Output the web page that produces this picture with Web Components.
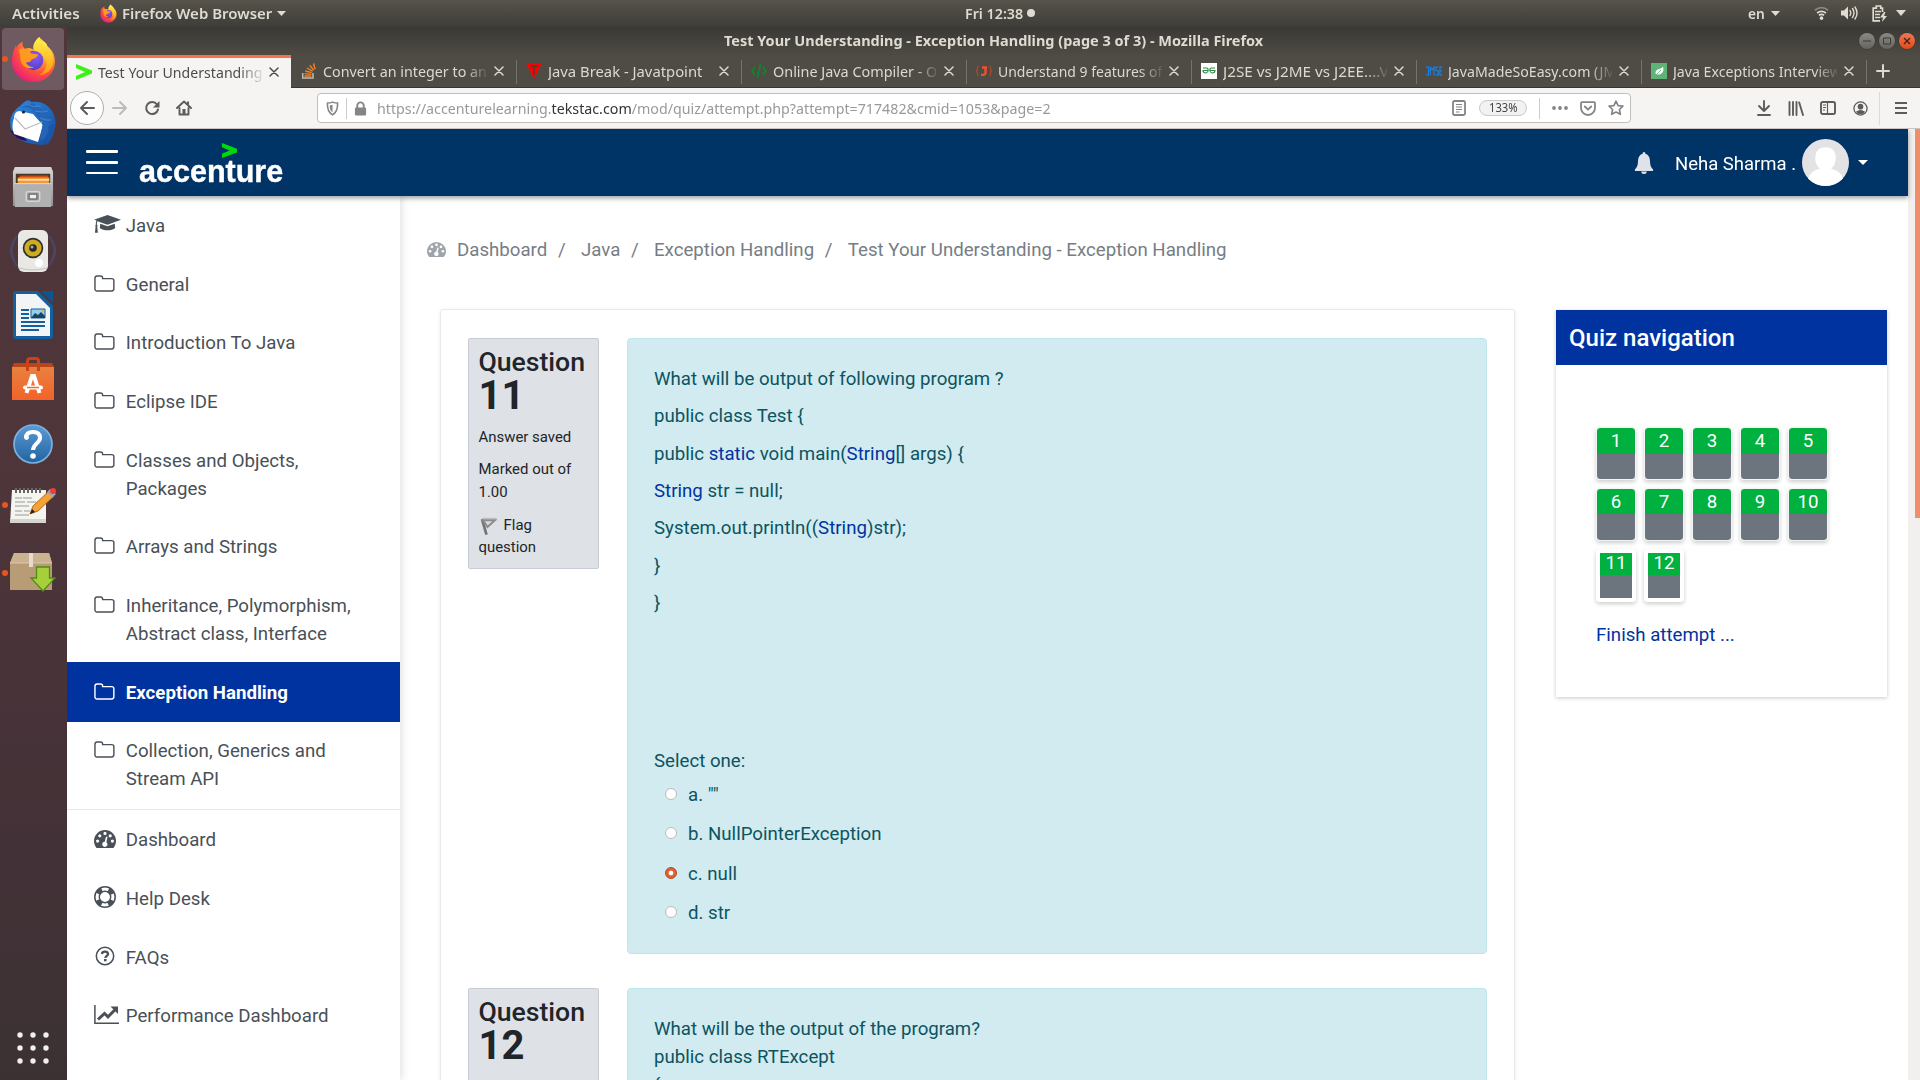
<!DOCTYPE html>
<html lang="en">
<head>
<meta charset="utf-8">
<title>Test Your Understanding - Exception Handling</title>
<style>
html,body{margin:0;padding:0;width:1920px;height:1080px;overflow:hidden;background:#fff}
</style>
</head>
<body>
<desk-screen></desk-screen>
<script>
const UI = '"Noto Sans","Open Sans",sans-serif';
const define = (name, html, setup) => customElements.define(name, class extends HTMLElement {
  connectedCallback() {
    if (this.shadowRoot) return;
    const root = this.attachShadow({mode: 'open'});
    const t = document.createElement('template');
    t.innerHTML = typeof html === 'function' ? html(this) : html;
    root.appendChild(t.content.cloneNode(true));
    if (setup) setup(this, root);
  }
});

const fox = `<defs><radialGradient id="a" cx=".75" cy=".15" r="1"><stop offset="0" stop-color="#fff44f"/><stop offset=".35" stop-color="#ffa436"/><stop offset=".65" stop-color="#ff4f3f"/><stop offset="1" stop-color="#e31587"/></radialGradient><radialGradient id="b" cx=".6" cy=".3" r=".8"><stop offset="0" stop-color="#9059ff"/><stop offset="1" stop-color="#4b3bb4"/></radialGradient><linearGradient id="c" x1="0" y1="0" x2="0" y2="1"><stop offset="0" stop-color="#fff44f"/><stop offset="1" stop-color="#ff980e"/></linearGradient></defs><path d="M5 9C3 14 1 18 1 26c0 12 10 21 22 21s22-9 22-21c0-5-2-10-5-13l-3-3c0-3-5-5-8-9-5 4-7 9-6 13-3-2-6-2-9-1-2-2-3-5-2-7-3 1-5 3-7 6z" fill="url(#a)"/><path d="M29 1c-6 5-7 10-5 14 6 2 11 6 12 12 1 7-4 12-8 13 9 0 17-7 15-18-1-7-7-11-10-14-3-2-4-4-4-7z" fill="url(#c)"/><circle cx="23" cy="25" r="10" fill="url(#b)"/><path d="M8 14c5-3 10 0 13 4l7 1c-1 3-4 4-7 5-1 3-4 3-6 3 2 3 5 5 9 5-7 3-13-1-14-7-1-4 0-6-2-11z" fill="#ff9a1f"/>`;
const dash = `<path fill-rule="evenodd" fill="currentColor" d="M2.6 18C1 16 0 13.600 0 11a11 11 0 0 1 22 0c0 2.600-1 5-2.600 7zM3.600 9.500a1.600 1.600 0 1 0 0 3.200a1.600 1.600 0 0 0 0-3.200M5.800 4.200a1.600 1.600 0 1 0 0 3.200a1.600 1.600 0 0 0 0-3.200M11 1.800a1.600 1.600 0 1 0 0 3.200a1.600 1.600 0 0 0 0-3.200M16.200 4.200a1.600 1.600 0 1 0 0 3.200a1.600 1.600 0 0 0 0-3.200M18.400 9.500a1.600 1.600 0 1 0 0 3.200a1.600 1.600 0 0 0 0-3.200M12 6.500l-1.300 5.200a2.600 2.600 0 1 0 1.700.5L13.500 7z"/>`;
const S = (w, d) => `<path fill="none" stroke="currentColor" stroke-width="${w}" stroke-linecap="round" stroke-linejoin="round" d="${d}"/>`;
const ICONS = {
  fox: ['0 0 46 48', fox],
  close: ['0 0 10 10', S(1.5, 'M1 1l8 8M9 1l-8 8')],
  plus: ['0 0 14 14', S(2, 'M7 1v12M1 7h12')],
  caret: ['0 0 10 6', '<path d="M0 0h10L5 6z" fill="currentColor"/>'],
  gt: ['0 0 16 16', '<path d="M0 0l16 6.500v3L0 16v-4l9-4-9-4z" fill="#3df01a"/>'],
  stack: ['0 0 14 16', '<path d="M1.500 10v5h9v-5" fill="none" stroke="#bcbbbb" stroke-width="1.300"/><path d="M3 13h6M3.200 10.700l6 .6M3.700 8l5.700 1.600M5.200 5l5 3.200M7.700 2.500l3.500 4.700M11 .5l1.300 5.700" stroke="#f48024" stroke-width="1.300"/>'],
  jtp: ['0 0 16 16', '<path d="M0 0h16L8 16z" fill="#f00"/><path d="M4.500 3h7M8 3v9" stroke="#4a3c35" stroke-width="1.500"/>'],
  code: ['0 0 16 16', '<path d="M4 4L1 8l3 4M12 4l3 4-3 4M9.500 1l-3 14" fill="none" stroke="#0a8a2a" stroke-width="1.600"/>'],
  jbr: ['0 0 16 16', '<path d="M2.500 3C.8 3 2 7.200.5 8c1.500.8.3 5 2 5M13.500 3c1.700 0 .5 4.200 2 5-1.500.8-.3 5-2 5" fill="none" stroke="#b8462c" stroke-width="1.200"/><path d="M6 4.500h5M9.500 4.500v5.500q0 2.200-4.500 1.800" fill="none" stroke="#f05032" stroke-width="2.400"/>'],
  gfg: ['0 0 16 16', '<path fill="#fff" d="M0 0h16v16H0z"/><path d="M2 5h3.500q1.700 0 1.700 2.200T5 10Q2 10 2 7.500h5M14 5h-3.500Q8.800 5 8.800 7.200T11 10q3 0 3-2.500H9" fill="none" stroke="#2f8d46" stroke-width="1.100"/>'],
  jmse: ['0 0 17 10', '<path d="M0 1h2.500v8H0M4.500 9.500V1l2 3 2-3v8.500M13 1h-2.500v3.800H13V9h-3M17 1h-2.200v8H17M14.800 5H17" fill="none" stroke="#1087f5" stroke-width="1.100"/>'],
  leaf: ['0 0 16 16', '<path fill="#5fb377" d="M0 0h16v16H0z"/><path d="M12 3.500c1.500 5-1 8.500-6 8-2 0-2-3 0-4.500s4-.5 6-3.500z" fill="#fff"/><path d="M4 13l6-6" stroke="#5fb377" stroke-width=".8"/>'],
  back: ['0 0 16 16', S(2, 'M15 8H2M8 2L2 8l6 6')],
  fwd: ['0 0 16 16', S(2, 'M1 8h13M8 2l6 6-6 6')],
  reload: ['0 0 16 16', S(2, 'M13 4.500a6 6 0 1 0 1 5') + '<path d="M15.500 1v6.500H9z" fill="currentColor"/>'],
  home: ['0 0 16 16', S(1.9, 'M1 8l7-6.500L15 8M3.500 8v6.500h9V8') + '<path fill="currentColor" d="M6.500 9h3v5.500h-3zM11 1.500h2v3h-2z"/>'],
  shield: ['0 0 14 16', S(1.7, 'M7 1.200c2 .9 4 1 5.500 1C12.700 8 12 12 7 14.800 2 12 1.300 8 1.500 2.200c1.500 0 3.500-.1 5.500-1z') + '<path d="M7 4v8C4.500 10 4 8 4 4.700z" fill="currentColor"/>'],
  lock: ['0 0 14 16', '<path d="M3.500 8V5a3.500 3.500 0 0 1 7 0v3" fill="none" stroke="currentColor" stroke-width="2"/><rect x="1" y="7" width="12" height="8.500" rx="1.200" fill="currentColor"/>'],
  reader: ['0 0 14 16', '<rect x="1" y="1" width="12" height="14" rx="1.500" fill="none" stroke="currentColor" stroke-width="1.800"/><path d="M4 4.500h6M4 7h6M4 9.500h6M4 12h3.500" stroke="currentColor" stroke-width="1.100"/>'],
  dots: ['0 0 16 4', '<g fill="currentColor"><circle cx="2" cy="2" r="1.900"/><circle cx="8" cy="2" r="1.900"/><circle cx="14" cy="2" r="1.900"/></g>'],
  pocket: ['0 0 16 15', S(1.8, 'M2 1.200h12q1 0 1 1V7a7 7 0 0 1-14 0V2.200q0-1 1-1zM4.800 5.500L8 8.700l3.200-3.200')],
  star: ['0 0 16 16', S(1.7, 'M8 1.200l2.100 4.400 4.800.6-3.500 3.300.9 4.800L8 12l-4.300 2.300.9-4.800L1.100 6.200l4.800-.6z')],
  down: ['0 0 14 16', S(1.9, 'M7 1v9.500M2 6l5 5 5-5M1 15h12')],
  lib: ['0 0 16 15', S(1.9, 'M1.500 1v13M5 1v13M8.500 1v13M11.200 1.500L15 14')],
  side: ['0 0 16 14', '<rect x="1" y="1" width="14" height="12" rx="1.800" fill="none" stroke="currentColor" stroke-width="1.900"/><path d="M7.500 1v12M3 4h3M3 6.500h3M3 9h2" stroke="currentColor" stroke-width="1.200"/>'],
  acct: ['0 0 16 16', '<circle cx="8" cy="8" r="7" fill="none" stroke="currentColor" stroke-width="1.400"/><circle cx="8" cy="6" r="3" fill="currentColor"/><path d="M3 11.500q5-4 10 0-1.500 2.700-5 2.700t-5-2.700z" fill="currentColor"/>'],
  menu: ['0 0 12 12', '<path d="M0 1h12M0 6h12M0 11h12" stroke="currentColor" stroke-width="1.800"/>'],
  wifi: ['0 0 16 15', '<path d="M1 4.500q7-5.500 14 0" fill="none" stroke="#8a8882" stroke-width="2"/><path d="M3.300 7.500q4.700-3.600 9.400 0M5.300 10q2.700-2 5.400 0" fill="none" stroke="currentColor" stroke-width="1.900"/><circle cx="8" cy="13" r="1.900" fill="currentColor"/>'],
  vol: ['0 0 17 14', '<path d="M0 4.500h3L7 .5v13L3 9.500H0z" fill="currentColor"/>' + S(1.4, 'M9 4.500q1.500 2.500 0 5M11.500 2.500q3 4.500 0 9M14 1q4 6 0 12')],
  batt: ['0 0 15 17', '<path d="M10.500 7V3.200H8.700V1H4.300v2.200H1.200V15.800H8M3 6.500h6M3 9.500h5M3 12.500h5" fill="none" stroke="currentColor" stroke-width="1.700"/><path d="M12 7l-4 5.500h3L10 17l5-6h-3l1.500-4z" fill="currentColor"/>'],
  bell: ['0 0 22 22', '<path d="M11 0q1.600 0 1.600 1.800C16 2.700 17.500 5.500 17.600 9c.1 5 1.400 6.500 3.400 8.400V19H1v-1.600C3 15.500 4.300 14 4.400 9 4.500 5.500 6 2.700 9.400 1.800 9.400 0 11 0 11 0zM8 19.500h6a3 2.500 0 0 1-6 0z" fill="currentColor"/>'],
  cap: ['0 0 28 20', '<path d="M14 0l14 5-14 5-10.500-3.600C3 7.500 3 9 3 10c1 .6.800 1.500.3 2L4 18.500H1L1.700 12c-.6-.6-.5-1.500.2-2 0-1.800.1-3 .7-4.200L0 5zM6.500 9l7.500 2.700L21.500 9l.5 4.500c-3.500 3.200-12.500 3.200-16 0z" fill="currentColor"/>'],
  folder: ['0 0 22 18', S(1.5, 'M1 3.500Q1 1 3.200 1h3.600Q9 1 9 3v.8h9.500q2.300 0 2.300 2.200v8.500q0 2.200-2.300 2.200H3.200Q1 16.700 1 14.500z')],
  dash: ['0 0 22 18', dash],
  ring: ['0 0 22 22', '<circle cx="11" cy="11" r="10.200" fill="none" stroke="currentColor" stroke-width="1.500"/><circle cx="11" cy="11" r="5.700" fill="none" stroke="currentColor" stroke-width="1.400"/><circle cx="11" cy="11" r="7.900" fill="none" stroke="currentColor" stroke-width="5" stroke-dasharray="5.800 6.600" stroke-dashoffset="-3.300"/>'],
  help: ['0 0 22 22', '<circle cx="11" cy="11" r="8.700" fill="none" stroke="currentColor" stroke-width="1.500"/><path d="M7.900 9Q8.200 6.700 11 6.700t3 2.300c0 1.900-2.600 1.800-2.600 3.900" fill="none" stroke="currentColor" stroke-width="2.300"/><path d="M10 14h2.600v2.300H10z" fill="currentColor"/>'],
  chart: ['0 0 25 20', '<path d="M.9 0v18.300H25" fill="none" stroke="currentColor" stroke-width="1.500"/><path d="M4 14.500l6.500-6 3.500 3.300 7-7" fill="none" stroke="currentColor" stroke-width="3"/><path d="M16.500 1.500H24V9z" fill="currentColor"/>'],
  flag: ['0 0 17 21', '<path d="M2 2.500l4.500 17" stroke="#737373" stroke-width="2.700"/><path d="M3 3.500h12L7.500 11z" fill="#dcdcdc" stroke="#8c8c8c" stroke-width="2.200"/><path d="M2.500 1.500h14" stroke="#b5b5b5"/>'],
  bird: ['0 0 48 48', '<defs><linearGradient id="t" x1="0" y1="0" x2="1" y2="1"><stop offset="0" stop-color="#2d8be0"/><stop offset="1" stop-color="#174a9c"/></linearGradient></defs><path d="M11 7Q15 3 17 2q4-2 5 1 14-2 21 9 6 11 2 20l-2 7-5 3 2 3-8 1Q8 44 3 33-3 16 11 7z" fill="url(#t)"/><path d="M1 31l12 4 5 7Q6 41 1 31z" fill="#26105b"/><path d="M5 19q0-6 5-7l14 3 8 9 2 2-5 17-24-8q-3-8 0-16z" fill="#fff"/><path d="M6 19l10 11 17-7" fill="none" stroke="#b9bec4" stroke-width="1.200"/><path d="M11 9q12-3 16 7 5 3 7 7l-3 18 4-1q9-12 3-25L24 4z" fill="#2565b8"/><path d="M36 39l9-5-6 11zM39 28l8-4-5 11z" fill="#1b56a8"/><path d="M17 5q8 4 15 2M26 12q8 2 13 0M31 19q6 3 11 2" stroke="#3f86d0" fill="none"/><circle cx="14.500" cy="13" r="1.600" fill="#14233f"/>'],
  files: ['0 0 44 44', '<defs><linearGradient id="f" x1="0" y1="0" x2="0" y2="1"><stop offset="0" stop-color="#d8d8d8"/><stop offset="1" stop-color="#8e8e8e"/></linearGradient></defs><path d="M3 1h38l2 5v36H1V6z" fill="url(#f)"/><path d="M4 8h36v11H4z" fill="#4b3527"/><path d="M8 10h30v9H8z" fill="#cc4e16"/><path d="M6 12h33v7H6z" fill="#f29838"/><path d="M6 14.500h33" stroke="#fff0d6" stroke-width="1.500"/><path d="M3 18h38v25H3z" fill="#b0b0b0"/><path d="M3 18.500h38" stroke="#ddd"/><rect x="15" y="27" width="14" height="10" rx="1.500" fill="#999" stroke="#d6d6d6" stroke-width="1.500"/><path d="M18 29.500h8v5h-8z" fill="#eee" stroke="#555"/>'],
  speaker: ['0 0 48 46', '<path d="M8 8Q-3 22 8 38M40 8q11 14 0 30M5 13q-6 9 0 19M43 13q6 9 0 19" fill="none" stroke="#4a4560" stroke-width="2.500"/><rect x="9" y="2" width="30" height="42" rx="6" fill="#e9e8e5"/><path d="M10 40q14 4 28 0" stroke="#c4c3bf" fill="none"/><circle cx="24" cy="20" r="10.300" fill="#2e2f33"/><circle cx="24" cy="20" r="8.600" fill="#cfab22"/><circle cx="24" cy="20" r="3.800" fill="#26282b"/><circle cx="23" cy="19" r="1.500" fill="#aaa"/><circle cx="30" cy="35" r="4" fill="#fff"/>'],
  writer: ['0 0 40 48', '<path d="M3 0h22l15 15v30q0 3-3 3H3q-3 0-3-3V3q0-3 3-3z" fill="#12609e"/><path d="M3 3h20l14 14v28H3z" fill="#f3f4f5"/><path d="M28 0h12v12z" fill="#0c578f"/><path d="M8 19h8M8 23h8M8 27h8M8 31h24M8 35h24M8 39h18" stroke="#12609e" stroke-width="2"/><path d="M18 18h14v9H18z" fill="#8fd0f0" stroke="#12609e"/><path d="M18 27l4-5 3 2 3-3 4 4v2z" fill="#20425c"/><circle cx="30" cy="20" r="1.300" fill="#e7b42b"/>'],
  bag: ['0 0 42 44', '<defs><linearGradient id="g" x1="0" y1="0" x2="0" y2="1"><stop offset="0" stop-color="#e8813f"/><stop offset="1" stop-color="#f2632a"/></linearGradient></defs><path d="M2 6h38l2 4v33H0V10z" fill="#b8441a"/><path d="M0 10h42v33H0z" fill="url(#g)"/><path d="M15.500 14V4q0-2.500 3-2.500h5q3 0 3 2.500v10" fill="none" stroke="#cc4215" stroke-width="3"/><path d="M14.500 36L20 19h2l5.500 17" fill="none" stroke="#fff" stroke-width="4"/><path d="M13 30.500h16" stroke="#fff" stroke-width="4" stroke-linecap="round"/><path d="M15 30.500h12" stroke="#f36c33" stroke-width="1.500"/>'],
  ask: ['0 0 42 42', '<defs><linearGradient id="h" x1="0" y1="0" x2="0" y2="1"><stop offset="0" stop-color="#5b9bd6"/><stop offset="1" stop-color="#22649f"/></linearGradient></defs><circle cx="21" cy="21" r="19" fill="url(#h)" stroke="#7db1df" stroke-width="1.700"/><path d="M14 15q0-6 7-6t7 6c0 5-7 6-7 12" fill="none" stroke="#fff" stroke-width="4"/><circle cx="14.500" cy="14.500" r="2.400" fill="#fff"/><circle cx="21" cy="33" r="2.800" fill="#fff"/>'],
  notes: ['0 0 46 38', '<path d="M2 4h34v33H0z" fill="#f4f4f1"/><path d="M0 33h36v4H0z" fill="#d5d5d0"/><path d="M6 2v5M10 2v5M14 2v5M18 2v5M22 2v5M26 2v5M30 2v5" stroke="#666" stroke-width="2"/><path d="M5 12h7m1 0h9M5 16h10m2 0h9M5 20h14M5 25h7m2 0h6M5 29h14" stroke="#999" stroke-width="1"/><path d="M20 28l3-8L39 5l5 5-16 15z" fill="#f5a136" stroke="#ae6217" stroke-width=".9"/><path d="M20 28l2-5 3 3z" fill="#222"/><path d="M37 6l3-3 6 5-4 4z" fill="#9ea5ad"/><circle cx="43" cy="5" r="3" fill="#ef3d3d"/>'],
  pack: ['0 0 46 40', '<path d="M4 0h35l3 10v27H0V10z" fill="#b79c76"/><path d="M4 0h35l3 10H0z" fill="#cbb391"/><path d="M0 10h42" stroke="#dac8ab" stroke-width="1.200"/><path d="M19 0h4v14h-4z" fill="#e7dccb"/><path d="M26.500 14h13v11H45L33 38 21 25h5.500z" fill="#a5cf3b" stroke="#4f8d17" stroke-width="1.300"/>'],
  grid: ['0 0 32 32', '<g fill="#f1eff0">' + [3,16,29].map(y => [3,16,29].map(x => `<circle cx="${x}" cy="${y}" r="2.700"/>`).join('')).join('') + '</g>'],
  person: ['0 0 46 46', '<circle cx="23" cy="23" r="23" fill="#e3e3e5"/><path d="M23 8q10 0 10 11 0 6-4.500 10 10 2 11.500 10-7 7-17 7T6 39q1.500-8 11.500-10Q13 25 13 19 13 8 23 8z" fill="#fff"/>'],
};
define('ui-icon', el => {
  const [vb, body] = ICONS[el.getAttribute('name')];
  const [, , w, h] = vb.split(' ').map(Number);
  const W = +(el.getAttribute('w') || w), H = +(el.getAttribute('h') || W * h / w);
  return `<style>:host{display:block;flex:none;width:${W}px;height:${H}px}svg{display:block}</style><svg width="${W}" height="${H}" viewBox="${vb}" preserveAspectRatio="none">${body}</svg>`;
});

/* Single-line label whose glyphs are condensed or widened to a given width. */
define('fit-text', el => `<style>:host{display:block;flex:none;width:${el.getAttribute('w')}px;white-space:pre}span{display:inline-block;transform-origin:0 50%}</style><span><slot></slot></span>`,
  (el, root) => {
    const s = root.querySelector('span');
    s.style.transform = `scaleX(${+el.getAttribute('w') / s.offsetWidth})`;
  });

define('top-panel', `<style>
:host{display:flex;height:27px;align-items:center;background:linear-gradient(#57534b,#3e3d38);color:#dfdbd2;font:600 14.500px/25px ${UI};padding:0 14px 1px 12px;box-sizing:border-box}
.l,.r{display:flex;align-items:center;width:953px;flex:none}.r{width:auto;margin-left:auto}
i{width:8px;height:8px;border-radius:50%;background:#dfdbd2;margin-left:4px}
</style><div class="l"><fit-text w="68">Activities</fit-text><ui-icon name="fox" w="17" h="19" style="margin:0 5px 0 20px"></ui-icon><fit-text w="150">Firefox Web Browser</fit-text><ui-icon name="caret" w="9" h="5" style="margin-left:5px"></ui-icon></div>
<fit-text w="58">Fri 12:38</fit-text><i></i>
<div class="r"><fit-text w="17">en</fit-text><ui-icon name="caret" w="9" h="5" style="margin:0 34px 0 6px"></ui-icon><ui-icon name="wifi" w="15" h="14"></ui-icon><ui-icon name="vol" w="17" h="14" style="margin:0 14px 0 12px"></ui-icon><ui-icon name="batt" w="15" h="17"></ui-icon><ui-icon name="caret" w="10" h="6" style="margin-left:9px"></ui-icon></div>`);

define('dock-item', el => `<style>:host{display:flex;position:relative;width:62px;height:62px;margin:1px 0 1px 2px;align-items:center;justify-content:center;flex:none;border-radius:4px}
:host([active]){background:#6e5a60}
b{position:absolute;left:0;top:28px;width:6px;height:6px;border-radius:50%;background:#e95420}</style><ui-icon name="${el.getAttribute('icon')}" w="${el.getAttribute('w')}"></ui-icon>${el.hasAttribute('run') ? '<b></b>' : ''}`);
define('app-dock', `<style>:host{display:flex;flex-direction:column;width:67px;flex:none;background:linear-gradient(#50363b,#4d353a 45%,#453238 70%,#3b3133)}
.grid{margin-top:auto;padding:0 0 16px 17px}</style>
<dock-item icon="fox" w="45" active run></dock-item><dock-item icon="bird" w="48"></dock-item><dock-item icon="files" w="42"></dock-item><dock-item icon="speaker" w="48"></dock-item><dock-item icon="writer" w="40"></dock-item><dock-item icon="bag" w="42"></dock-item><dock-item icon="ask" w="42" style="margin-top:2px"></dock-item><dock-item icon="notes" w="46" run style="margin-top:-2px"></dock-item><dock-item icon="pack" w="46" run style="margin-top:5px"></dock-item>
<div class="grid"><ui-icon name="grid" w="32"></ui-icon></div>`);

define('title-bar', `<style>:host{display:flex;height:28px;align-items:center;background:linear-gradient(#3a3935,#4e4b44);color:#dfdbd2;font:700 14.500px/25px ${UI};padding-left:657px}
fit-text{margin-bottom:2px}
.b{display:flex;gap:4px;margin-left:auto;padding-right:5px}
.b span{width:16px;height:16px;border-radius:50%;background:linear-gradient(#8b8981,#66645e);display:flex;align-items:center;justify-content:center;box-shadow:0 0 0 .5px #333}
.b span:last-child{background:linear-gradient(#f4774f,#df4b1c)}</style>
<fit-text w="539">Test Your Understanding - Exception Handling (page 3 of 3) - Mozilla Firefox</fit-text>
<div class="b"><span><svg width="8" height="8"><path d="M0 4h8" stroke="#3b3a36"/></svg></span><span><svg width="8" height="8"><path d="M.5 1h7v6h-7z" fill="none" stroke="#3b3a36"/></svg></span><span><svg width="8" height="8"><path d="M1 1l6 6M7 1L1 7" stroke="#40201a" stroke-width="1.300"/></svg></span></div>`);

define('browser-tab', el => `<style>:host{display:flex;width:225px;height:33px;flex:none;box-sizing:border-box;align-items:center;position:relative;color:#dcd9d2;font:15px/30px ${UI};border-bottom:1px solid #36352f;padding-left:10px}
:host([active]){width:224px;background:#f5f4f2;color:#4c4c4c;border-bottom:0;border-top:3px solid #f0764a;padding-left:9px;padding-bottom:3px}
.ic{width:16px;margin-right:6px;flex:none;display:flex;justify-content:center}
.t{width:164px;overflow:hidden;flex:none}
:host(:not([full])) .t{-webkit-mask-image:linear-gradient(90deg,#000 86%,transparent 102%)}
.x{margin-left:7px}
.s{position:absolute;right:-1px;top:5px;height:24px;width:1px;background:#76736b}
:host([active]) .s{display:none}</style><div class="ic"><ui-icon name="${el.getAttribute('icon')}" w="16" h="${el.getAttribute('icon') === 'jmse' ? 10 : 16}"></ui-icon></div><div class="t"><fit-text w="${el.getAttribute('tw') || 164}"><slot></slot></fit-text></div><ui-icon class="x" name="close" w="10"></ui-icon><i class="s"></i>`,
  (el, root) => {
    const f = root.querySelector('fit-text'), s = f.shadowRoot.querySelector('span');
    s.style.transform = 'none';
    s.style.transform = `scaleX(${+f.getAttribute('w') / s.offsetWidth})`;
  });
define('tab-strip', `<style>:host{display:flex;height:33px;background:#4f4c45;color:#dcd9d2}.e{flex:1;border-bottom:1px solid #36352f;display:flex;align-items:center;padding-left:10px}</style>
<browser-tab icon="gt" active>Test Your Understanding</browser-tab><browser-tab icon="stack">Convert an integer to an</browser-tab><browser-tab icon="jtp" tw="154" full>Java Break - Javatpoint</browser-tab><browser-tab icon="code">Online Java Compiler - O</browser-tab><browser-tab icon="jbr">Understand 9 features of</browser-tab><browser-tab icon="gfg" tw="166">J2SE vs J2ME vs J2EE....V</browser-tab><browser-tab icon="jmse" tw="168">JavaMadeSoEasy.com (JM</browser-tab><browser-tab icon="leaf" tw="168">Java Exceptions Interview</browser-tab><div class="e"><ui-icon name="plus" w="14"></ui-icon></div>`);

define('nav-toolbar', `<style>:host{display:flex;height:41px;box-sizing:border-box;align-items:center;background:#f5f4f2;border-bottom:1px solid #c9c6c2;color:#5c5c5c;padding-left:3px;padding-right:13px}
.back{width:32px;height:32px;border:1px solid #b0aeab;border-radius:50%;background:#fdfdfd;display:flex;align-items:center;justify-content:center}
.url{display:flex;align-items:center;box-sizing:border-box;width:1314px;height:30px;margin-left:125px;background:#fff;border:1px solid #c2bfbb;border-radius:4px;color:#858585;padding:0 6px 0 8px;font:15px/28px ${UI}}
.url b{font-weight:400;color:#333}
.v{width:1px;height:21px;background:#ccc}
.zoom{border:1px solid #c9c9c9;background:#f2f2f2;border-radius:9px;width:46px;height:14px;color:#444;font:12px/14px ${UI};display:flex;justify-content:center}
fit-text{color:#999}.zoom fit-text{color:#444}
</style>
<div class="back"><ui-icon name="back" w="16"></ui-icon></div><ui-icon name="fwd" w="16" style="margin:0 16px 0 8px;color:#bbb"></ui-icon><ui-icon name="reload" w="16"></ui-icon><ui-icon name="home" w="16" style="margin-left:16px"></ui-icon>
<div class="url"><ui-icon name="shield" w="13" h="15"></ui-icon><i class="v" style="margin:0 7px 0 7px"></i><ui-icon name="lock" w="13" h="15" style="margin-right:10px"></ui-icon><fit-text w="674">https://accenturelearning.<b>tekstac.com</b>/mod/quiz/attempt.php?attempt=717482&amp;cmid=1053&amp;page=2</fit-text>
<ui-icon name="reader" w="14" h="16" style="margin-left:auto"></ui-icon><div class="zoom" style="margin:0 12px 0 13px"><fit-text w="29">133%</fit-text></div><i class="v"></i><ui-icon name="dots" w="16" style="margin:0 12px"></ui-icon><ui-icon name="pocket" w="16" h="15"></ui-icon><ui-icon name="star" w="16" style="margin-left:12px"></ui-icon></div>
<ui-icon name="down" w="14" h="16" style="margin-left:auto"></ui-icon><ui-icon name="lib" w="16" h="15" style="margin-left:17px"></ui-icon><ui-icon name="side" w="16" h="14" style="margin-left:16px"></ui-icon><ui-icon name="acct" w="15" style="margin-left:17px"></ui-icon><i class="v" style="height:33px;margin:0 15px 0 11px;background:#dcdad7"></i><ui-icon name="menu" w="12"></ui-icon>`);

define('site-header', `<style>:host{display:flex;height:67px;flex:none;background:#036;align-items:center;position:relative;z-index:2;box-shadow:0 2px 5px rgba(0,0,0,.4);color:#fff;font:18.670px/28px Roboto,sans-serif;padding:0 40px 0 19px}
.h{display:flex;flex-direction:column;gap:8px;width:32px;padding-bottom:1px}.h i{height:3px;background:#fff;border-radius:1px}.h i:last-child{height:2px}
.logo{margin-left:21px;position:relative;font:700 32px/36px "Liberation Sans",sans-serif;padding-top:17px;width:145px;height:36px;-webkit-text-stroke:.4px #fff}
.logo svg{position:absolute;left:83px;top:7px}
.r{display:flex;align-items:center;margin-left:auto}.r fit-text{padding-top:2px}</style>
<div class="h"><i></i><i></i><i></i></div><div class="logo"><fit-text w="144">accenture</fit-text><svg width="15" height="15" viewBox="0 0 16 16"><path d="M0 0l16 6v4L0 16v-4.500L8 8 0 4.500z" fill="#00d80d"/></svg></div>
<div class="r"><ui-icon name="bell" w="20" h="22" style="margin-right:21px;color:#dee2e9"></ui-icon><fit-text w="121">Neha Sharma .</fit-text><ui-icon name="person" w="47" style="margin:0 9px 0 6px"></ui-icon><ui-icon name="caret" w="10" h="5"></ui-icon></div>`);

define('side-link', el => `<style>:host{display:flex;box-sizing:border-box;min-height:58.670px;padding:16px 30px 14.670px 26.800px;color:#495057;font:18.670px/28px Roboto,sans-serif}
:host([active]){background:#0033a0;color:#fff;font-weight:700;min-height:60px;margin:-.67px 0;padding-top:17px}
.i{width:32px;flex:none;display:flex;height:25px;align-items:center}</style><div class="i"><ui-icon name="${el.getAttribute('icon') || 'folder'}" w="${el.getAttribute('w') || 21}"></ui-icon></div><div><slot></slot></div>`);
define('side-nav', `<style>:host{display:block;width:333px;flex:none;background:#fff;box-shadow:2px 0 8px rgba(0,0,0,.12)}
hr{margin:.8px 0 .6px;border:0;height:1px;background:#e6e8ea}</style>
<side-link icon="cap" w="27">Java</side-link><side-link>General</side-link><side-link>Introduction To Java</side-link><side-link>Eclipse IDE</side-link><side-link>Classes and Objects,<br>Packages</side-link><side-link>Arrays and Strings</side-link><side-link>Inheritance, Polymorphism,<br>Abstract class, Interface</side-link><side-link active>Exception Handling</side-link><side-link>Collection, Generics and<br>Stream API</side-link><hr>
<side-link icon="dash" w="22">Dashboard</side-link><side-link icon="ring" w="22">Help Desk</side-link><side-link icon="help" w="22">FAQs</side-link><side-link icon="chart" w="25">Performance Dashboard</side-link>`);

define('crumb-trail', `<style>:host{display:flex;align-items:center;color:#767d85;font:18.670px/28px Roboto,sans-serif;height:28px}span{white-space:pre}i{font-style:normal;margin:0 15.300px 0 10.700px}</style>
<ui-icon name="dash" w="19" h="15" style="margin-right:11px;color:#a0a5ac"></ui-icon><span>Dashboard</span><i>/</i><span>Java</span><i>/</i><span>Exception Handling</span><i>/</i><span>Test Your Understanding - Exception Handling</span>`);

define('question-info', el => `<style>:host{display:block;box-sizing:border-box;width:131px;flex:none;align-self:flex-start;background:#dee1e6;border:1px solid #c8ccd5;border-radius:2px;padding:7px 9px 9px 9.500px;color:#212529;font:14.930px/22.400px Roboto,sans-serif}
h3{margin:0 0 13px;font:500 26.670px/32px Roboto,sans-serif;white-space:nowrap;letter-spacing:-.05px}
h3 b{display:block;font:700 40px/35px Roboto,sans-serif}
p{margin:0 0 10px}p:last-child{margin:0;padding-top:.500px}
ui-icon{display:inline-block;vertical-align:-6px;margin:0 7px 0 1px}</style>
<h3>Question<b>${el.getAttribute('no')}</b></h3><p>Answer saved</p><p>Marked out of 1.00</p><p><ui-icon name="flag" w="17" h="19"></ui-icon>Flag<br>question</p>`);
define('answer-option', el => `<style>:host{display:flex;align-items:center;height:39.300px;padding-left:11px}
i{width:10px;height:10px;border:1px solid #bbb;border-radius:50%;background:#fff;margin:0 11px 2px 0}
:host([checked]) i{border-color:#b9491d;background:radial-gradient(circle,#fff 0 2px,#dd6236 2.700px)}</style><i></i><span><slot></slot></span>`);
define('question-body', `<style>:host{display:block;box-sizing:border-box;width:860px;flex:none;background:#d1ebf0;border:1px solid #bce6ec;border-radius:4px;padding:26px 26px 20.100px;color:#0c5460;font:18.670px/28px Roboto,sans-serif}</style><slot></slot>`);
define('question-row', `<style>:host{display:flex;gap:28px}</style><slot></slot>`);

define('quiz-main', `<style>:host{display:block;width:1075px;height:800px;box-sizing:border-box;border:1px solid #e8eaed;border-radius:3px;box-shadow:0 1px 4px rgba(0,0,0,.08);padding:28px 27px}
p{margin:0 0 9.330px}em{font-style:normal;color:#0033a0}
.gap{height:120.500px}.sel{margin:0 0 .500px}</style>
<question-row><question-info no="11"></question-info><question-body><p>What will be output of following program ?</p><p>public class Test {</p><p>public <em>static</em> void main(<em>String</em>[] args) {</p><p><em>String</em> str = null;</p><p>System.out.println((<em>String</em>)str);</p><p>}</p><p>}</p><div class="gap"></div><div class="sel">Select one:</div><answer-option>a. ""</answer-option><answer-option>b. NullPointerException</answer-option><answer-option checked>c. null</answer-option><answer-option>d. str</answer-option></question-body></question-row>
<question-row style="margin-top:34px"><question-info no="12"></question-info><question-body>What will be the output of the program?<br>public class RTExcept<br>{</question-body></question-row>`);

define('nav-button', `<style>:host{display:block;box-sizing:border-box;width:40px;height:53px;border:1px solid #f3f5f5;border-radius:4px;background:linear-gradient(#00b140 50%,#6c757d 50%);color:#fff;text-align:center;box-shadow:0 2px 4px rgba(0,0,0,.2);font:18.670px/27px Roboto,sans-serif}
:host([here]){border:4px solid #fff;line-height:20px;background-clip:padding-box}</style><slot></slot>`);
define('quiz-navigation', `<style>:host{display:block;width:331px;height:387px;box-shadow:0 1px 4px rgba(0,0,0,.22);font:18.670px/28px Roboto,sans-serif;color:#0033a0;margin-top:1px}
h2{margin:0;height:55px;background:#0033a0;color:#fff;font:500 24px/56px Roboto,sans-serif;padding-left:13px}
.g{display:grid;grid-template-columns:repeat(5,40px);gap:8px;padding:62px 0 19px 40px}a{margin-left:40px}</style>
<h2>Quiz navigation</h2><div class="g">${[1,2,3,4,5,6,7,8,9,10,11,12].map(n => `<nav-button${n > 10 ? ' here' : ''}>${n}</nav-button>`).join('')}</div><a>Finish attempt ...</a>`);

define('web-page', `<style>:host{display:flex;height:951px;overflow:hidden}
.doc{width:1841px;display:flex;flex-direction:column;background:#fff}
.main{display:flex;flex:1;min-height:0}
.c{flex:1;padding:39.500px 0 0 27px}
.cols{display:flex;gap:41px;padding:45.500px 0 0 13px}
.sb{flex:1;background:#f1f0ef;display:flex;justify-content:flex-end}.sb i{width:5px;height:389px;background:#f08e6b}</style>
<div class="doc"><site-header></site-header><div class="main"><side-nav></side-nav><div class="c"><crumb-trail></crumb-trail><div class="cols"><quiz-main></quiz-main><quiz-navigation></quiz-navigation></div></div></div></div><div class="sb"><i></i></div>`);

define('desk-screen', `<style>:host{display:flex;flex-direction:column;width:1920px;height:1080px;overflow:hidden}.b{display:flex;flex:1;min-height:0}.w{flex:1;min-width:0}</style>
<top-panel></top-panel><div class="b"><app-dock></app-dock><div class="w"><title-bar></title-bar><tab-strip></tab-strip><nav-toolbar></nav-toolbar><web-page></web-page></div></div>`);
</script>
</body>
</html>
